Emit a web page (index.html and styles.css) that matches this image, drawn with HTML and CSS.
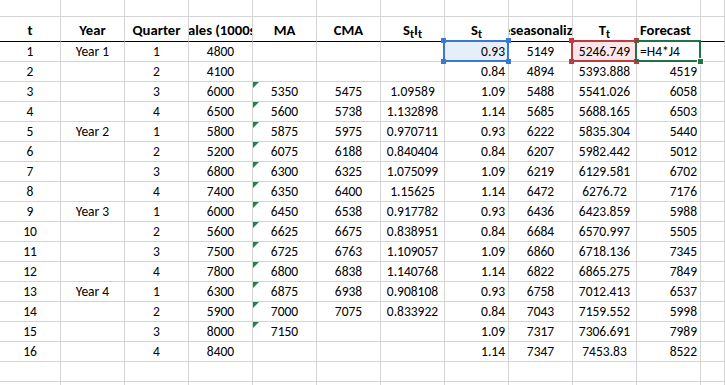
FILE: index.html
```html
<!DOCTYPE html>
<html lang="en">
<head>
    <meta charset="UTF-8">
    <title>Sales forecast - decomposition</title>
    <link rel="stylesheet" href="styles.css">
</head>
<body>
    <div class="sheet">
        <!-- top row (cut off) -->
        <div class="row row-top">
            <div class="cell"></div><div class="cell"></div><div class="cell"></div><div class="cell"></div>
            <div class="cell"></div><div class="cell"></div><div class="cell"></div><div class="cell"></div>
            <div class="cell"></div><div class="cell"></div><div class="cell"></div><div class="cell"></div>
        </div>

        <!-- Header -->
        <div class="row row-head">
            <div class="cell"><span>t</span></div>
            <div class="cell"><span>Year</span></div>
            <div class="cell"><span>Quarter</span></div>
            <div class="cell"><span>Sales (1000s)</span></div>
            <div class="cell"><span>MA</span></div>
            <div class="cell"><span>CMA</span></div>
            <div class="cell"><span>S<sub>t</sub>I<sub>t</sub></span></div>
            <div class="cell"><span>S<sub>t</sub></span></div>
            <div class="cell"><span>Deseasonalized</span></div>
            <div class="cell"><span>T<sub>t</sub></span></div>
            <div class="cell left"><span>Forecast</span></div>
            <div class="cell"></div>
        </div>

        <div class="row">
            <div class="cell">1</div><div class="cell">Year 1</div><div class="cell">1</div><div class="cell">4800</div>
            <div class="cell"></div><div class="cell"></div><div class="cell"></div>
            <div class="cell right ref ref-blue">0.93<i class="h tl"></i><i class="h tr"></i><i class="h bl"></i><i class="h br"></i></div>
            <div class="cell">5149</div>
            <div class="cell ref ref-red">5246.749<i class="h tl"></i><i class="h tr"></i><i class="h bl"></i><i class="h br"></i></div>
            <div class="cell left ref ref-green">=H4*J4<i class="h br"></i></div>
            <div class="cell"></div>
        </div>
        <div class="row">
            <div class="cell">2</div><div class="cell"></div><div class="cell">2</div><div class="cell">4100</div>
            <div class="cell"></div><div class="cell"></div><div class="cell"></div>
            <div class="cell right">0.84</div><div class="cell">4894</div><div class="cell">5393.888</div><div class="cell right">4519</div><div class="cell"></div>
        </div>
        <div class="row">
            <div class="cell">3</div><div class="cell"></div><div class="cell">3</div><div class="cell">6000</div>
            <div class="cell flag">5350</div><div class="cell">5475</div><div class="cell">1.09589</div>
            <div class="cell right">1.09</div><div class="cell">5488</div><div class="cell">5541.026</div><div class="cell right">6058</div><div class="cell"></div>
        </div>
        <div class="row">
            <div class="cell">4</div><div class="cell"></div><div class="cell">4</div><div class="cell">6500</div>
            <div class="cell flag">5600</div><div class="cell">5738</div><div class="cell">1.132898</div>
            <div class="cell right">1.14</div><div class="cell">5685</div><div class="cell">5688.165</div><div class="cell right">6503</div><div class="cell"></div>
        </div>
        <div class="row">
            <div class="cell">5</div><div class="cell">Year 2</div><div class="cell">1</div><div class="cell">5800</div>
            <div class="cell flag">5875</div><div class="cell">5975</div><div class="cell">0.970711</div>
            <div class="cell right">0.93</div><div class="cell">6222</div><div class="cell">5835.304</div><div class="cell right">5440</div><div class="cell"></div>
        </div>
        <div class="row">
            <div class="cell">6</div><div class="cell"></div><div class="cell">2</div><div class="cell">5200</div>
            <div class="cell flag">6075</div><div class="cell">6188</div><div class="cell">0.840404</div>
            <div class="cell right">0.84</div><div class="cell">6207</div><div class="cell">5982.442</div><div class="cell right">5012</div><div class="cell"></div>
        </div>
        <div class="row">
            <div class="cell">7</div><div class="cell"></div><div class="cell">3</div><div class="cell">6800</div>
            <div class="cell flag">6300</div><div class="cell">6325</div><div class="cell">1.075099</div>
            <div class="cell right">1.09</div><div class="cell">6219</div><div class="cell">6129.581</div><div class="cell right">6702</div><div class="cell"></div>
        </div>
        <div class="row">
            <div class="cell">8</div><div class="cell"></div><div class="cell">4</div><div class="cell">7400</div>
            <div class="cell flag">6350</div><div class="cell">6400</div><div class="cell">1.15625</div>
            <div class="cell right">1.14</div><div class="cell">6472</div><div class="cell">6276.72</div><div class="cell right">7176</div><div class="cell"></div>
        </div>
        <div class="row">
            <div class="cell">9</div><div class="cell">Year 3</div><div class="cell">1</div><div class="cell">6000</div>
            <div class="cell flag">6450</div><div class="cell">6538</div><div class="cell">0.917782</div>
            <div class="cell right">0.93</div><div class="cell">6436</div><div class="cell">6423.859</div><div class="cell right">5988</div><div class="cell"></div>
        </div>
        <div class="row">
            <div class="cell">10</div><div class="cell"></div><div class="cell">2</div><div class="cell">5600</div>
            <div class="cell flag">6625</div><div class="cell">6675</div><div class="cell">0.838951</div>
            <div class="cell right">0.84</div><div class="cell">6684</div><div class="cell">6570.997</div><div class="cell right">5505</div><div class="cell"></div>
        </div>
        <div class="row">
            <div class="cell">11</div><div class="cell"></div><div class="cell">3</div><div class="cell">7500</div>
            <div class="cell flag">6725</div><div class="cell">6763</div><div class="cell">1.109057</div>
            <div class="cell right">1.09</div><div class="cell">6860</div><div class="cell">6718.136</div><div class="cell right">7345</div><div class="cell"></div>
        </div>
        <div class="row">
            <div class="cell">12</div><div class="cell"></div><div class="cell">4</div><div class="cell">7800</div>
            <div class="cell flag">6800</div><div class="cell">6838</div><div class="cell">1.140768</div>
            <div class="cell right">1.14</div><div class="cell">6822</div><div class="cell">6865.275</div><div class="cell right">7849</div><div class="cell"></div>
        </div>
        <div class="row">
            <div class="cell">13</div><div class="cell">Year 4</div><div class="cell">1</div><div class="cell">6300</div>
            <div class="cell flag">6875</div><div class="cell">6938</div><div class="cell">0.908108</div>
            <div class="cell right">0.93</div><div class="cell">6758</div><div class="cell">7012.413</div><div class="cell right">6537</div><div class="cell"></div>
        </div>
        <div class="row">
            <div class="cell">14</div><div class="cell"></div><div class="cell">2</div><div class="cell">5900</div>
            <div class="cell flag">7000</div><div class="cell">7075</div><div class="cell">0.833922</div>
            <div class="cell right">0.84</div><div class="cell">7043</div><div class="cell">7159.552</div><div class="cell right">5998</div><div class="cell"></div>
        </div>
        <div class="row">
            <div class="cell">15</div><div class="cell"></div><div class="cell">3</div><div class="cell">8000</div>
            <div class="cell flag">7150</div><div class="cell"></div><div class="cell"></div>
            <div class="cell right">1.09</div><div class="cell">7317</div><div class="cell">7306.691</div><div class="cell right">7989</div><div class="cell"></div>
        </div>
        <div class="row">
            <div class="cell">16</div><div class="cell"></div><div class="cell">4</div><div class="cell">8400</div>
            <div class="cell"></div><div class="cell"></div><div class="cell"></div>
            <div class="cell right">1.14</div><div class="cell">7347</div><div class="cell">7453.83</div><div class="cell right">8522</div><div class="cell"></div>
        </div>

        <!-- empty rows below the data -->
        <div class="row">
            <div class="cell"></div><div class="cell"></div><div class="cell"></div><div class="cell"></div>
            <div class="cell"></div><div class="cell"></div><div class="cell"></div><div class="cell"></div>
            <div class="cell"></div><div class="cell"></div><div class="cell"></div><div class="cell"></div>
        </div>
        <div class="row">
            <div class="cell"></div><div class="cell"></div><div class="cell"></div><div class="cell"></div>
            <div class="cell"></div><div class="cell"></div><div class="cell"></div><div class="cell"></div>
            <div class="cell"></div><div class="cell"></div><div class="cell"></div><div class="cell"></div>
        </div>
    </div>
</body>
</html>
```

FILE: styles.css
```css
body {
    margin: 0;
    background: #ffffff;
    color: #000000;
    font-family: 'Carlito', 'Lato', 'Liberation Sans', sans-serif;
    font-size: 13.5px;
    overflow: hidden;
}

.sheet {
    width: 725px;
}

.row {
    display: grid;
    grid-template-columns: 61px repeat(10, 64px) 1fr;
    height: 20px;
}

.cell {
    position: relative;
    box-sizing: border-box;
    display: flex;
    align-items: flex-end;
    justify-content: center;
    padding: 0 3px 0;
    line-height: 18px;
    border-right: 1px solid #d4d4d4;
    border-bottom: 1px solid #d4d4d4;
    white-space: nowrap;
    overflow: hidden;
}

.cell.left {
    justify-content: flex-start;
}

.cell.right {
    justify-content: flex-end;
}

/* cut-off row above the header */
.row-top {
    height: 17px;
}

.row-head {
    height: 25px;
}

.row-head .cell {
    font-size: 14.67px;
    font-weight: bold;
    border-bottom-color: #000000;
    padding-bottom: 2px;
}

.row-head sub {
    font-size: 0.8em;
    line-height: 0;
    vertical-align: -0.25em;
}

/* green error marker in the corner */
.flag::before {
    content: "";
    position: absolute;
    top: 0;
    left: 0;
    border-top: 6px solid #1e8449;
    border-right: 6px solid transparent;
}

/* formula reference highlight boxes */
.ref {
    overflow: visible;
    z-index: 1;
}

.ref::after {
    content: "";
    position: absolute;
    top: -2px;
    left: -2px;
    right: -1px;
    bottom: -1px;
    border: 2px solid;
    pointer-events: none;
}

.ref-blue {
    background: #e6eef9;
}
.ref-blue::after,
.ref-blue .h {
    border-color: #3b78cf;
    background-color: #3b78cf;
}
.ref-blue::after {
    background: none;
}

.ref-red {
    background: #fbe7e7;
}
.ref-red::after,
.ref-red .h {
    border-color: #c0393f;
    background-color: #c0393f;
}
.ref-red::after {
    background: none;
}

.ref-green::after {
    border-color: #217346;
}
.ref-green .h {
    background-color: #217346;
    outline: 1px solid #ffffff;
}

.h {
    position: absolute;
    width: 5px;
    height: 5px;
    z-index: 2;
}

.h.tl { top: -4px; left: -4px; }
.h.tr { top: -4px; right: -3px; }
.h.bl { bottom: -3px; left: -4px; }
.h.br { bottom: -3px; right: -3px; }
```
